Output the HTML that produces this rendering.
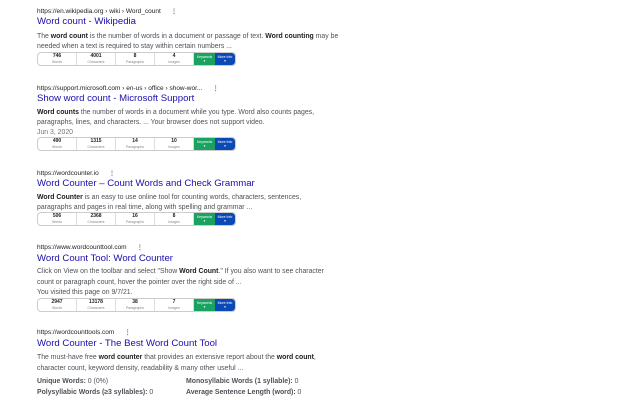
<!DOCTYPE html>
<html><head><meta charset="utf-8"><style>
*{margin:0;padding:0;box-sizing:border-box}
body{width:640px;height:400px;background:#fff;font-family:"Liberation Sans",Arial,sans-serif;position:relative;overflow:hidden}
.a{position:absolute;left:37px;white-space:nowrap}
.u{font-size:6.5px;color:#202124}
.u .d{color:#70757a;margin-left:10px;font-weight:bold}
.t{font-size:9.6px;color:#1a0dab}
.s{font-size:6.9px;color:#4d5156}
.s b{color:#202124}
.bar{position:absolute;left:37px;width:199px;height:14px;border:1px solid #ccc;border-radius:4px;display:flex;overflow:hidden;background:#fff}
.c{width:39px;border-right:1px solid #ddd;text-align:center;font-size:5px;line-height:5.5px;padding-top:1px;color:#222}
.c b{display:block;font-size:5px}
.c i{font-style:normal;color:#888;font-size:3.5px}
.g{width:21px;background:#1aa260;color:#fff;font-size:3.5px;text-align:center;padding-top:2px}
.bl{flex:1;background:#0b49b6;color:#fff;font-size:3.5px;text-align:center;padding-top:2px;border-radius:0 3px 3px 0}
</style></head><body>
<div class="a u" style="top:7px">https://en.wikipedia.org › wiki › Word_count<span class="d">⋮</span></div>
<div class="a t" style="top:16px">Word count - Wikipedia</div>
<div class="a s" style="top:33px">The <b>word count</b> is the number of words in a document or passage of text. <b>Word counting</b> may be</div>
<div class="a s" style="top:43px">needed when a text is required to stay within certain numbers ...</div>
<div class="bar" style="top:52px"><div class="c"><b>746</b><i>Words</i></div><div class="c"><b>4001</b><i>Characters</i></div><div class="c"><b>8</b><i>Paragraphs</i></div><div class="c"><b>4</b><i>Images</i></div><div class="g">Keywords<br>▾</div><div class="bl">More Info<br>▾</div></div>

<div class="a u" style="top:84px">https://support.microsoft.com › en-us › office › show-wor...<span class="d">⋮</span></div>
<div class="a t" style="top:93px">Show word count - Microsoft Support</div>
<div class="a s" style="top:109px"><b>Word counts</b> the number of words in a document while you type. Word also counts pages,</div>
<div class="a s" style="top:119px">paragraphs, lines, and characters. ... Your browser does not support video.</div>
<div class="a s" style="top:129px;color:#70757a">Jun 3, 2020</div>
<div class="bar" style="top:137px"><div class="c"><b>490</b><i>Words</i></div><div class="c"><b>1315</b><i>Characters</i></div><div class="c"><b>14</b><i>Paragraphs</i></div><div class="c"><b>10</b><i>Images</i></div><div class="g">Keywords<br>▾</div><div class="bl">More Info<br>▾</div></div>

<div class="a u" style="top:169px">https://wordcounter.io<span class="d">⋮</span></div>
<div class="a t" style="top:178px">Word Counter – Count Words and Check Grammar</div>
<div class="a s" style="top:194px"><b>Word Counter</b> is an easy to use online tool for counting words, characters, sentences,</div>
<div class="a s" style="top:204px">paragraphs and pages in real time, along with spelling and grammar ...</div>
<div class="bar" style="top:212px"><div class="c"><b>506</b><i>Words</i></div><div class="c"><b>2368</b><i>Characters</i></div><div class="c"><b>16</b><i>Paragraphs</i></div><div class="c"><b>8</b><i>Images</i></div><div class="g">Keywords<br>▾</div><div class="bl">More Info<br>▾</div></div>

<div class="a u" style="top:243px">https://www.wordcounttool.com<span class="d">⋮</span></div>
<div class="a t" style="top:253px">Word Count Tool: Word Counter</div>
<div class="a s" style="top:268px">Click on View on the toolbar and select "Show <b>Word Count</b>." If you also want to see character</div>
<div class="a s" style="top:279px">count or paragraph count, hover the pointer over the right side of ...</div>
<div class="a s" style="top:289px">You visited this page on 9/7/21.</div>
<div class="bar" style="top:298px"><div class="c"><b>2947</b><i>Words</i></div><div class="c"><b>13178</b><i>Characters</i></div><div class="c"><b>38</b><i>Paragraphs</i></div><div class="c"><b>7</b><i>Images</i></div><div class="g">Keywords<br>▾</div><div class="bl">More Info<br>▾</div></div>

<div class="a u" style="top:328px">https://wordcounttools.com<span class="d">⋮</span></div>
<div class="a t" style="top:338px">Word Counter - The Best Word Count Tool</div>
<div class="a s" style="top:354px">The must-have free <b>word counter</b> that provides an extensive report about the <b>word count</b>,</div>
<div class="a s" style="top:365px">character count, keyword density, readability &amp; many other useful ...</div>
<div class="a s" style="top:378px"><b style="color:#4d5156">Unique Words:</b> 0 (0%)</div>
<div class="a s" style="top:378px;left:186px"><b style="color:#4d5156">Monosyllabic Words (1 syllable):</b> 0</div>
<div class="a s" style="top:389px"><b style="color:#4d5156">Polysyllabic Words (≥3 syllables):</b> 0</div>
<div class="a s" style="top:389px;left:186px"><b style="color:#4d5156">Average Sentence Length (word):</b> 0</div>
</body></html>
